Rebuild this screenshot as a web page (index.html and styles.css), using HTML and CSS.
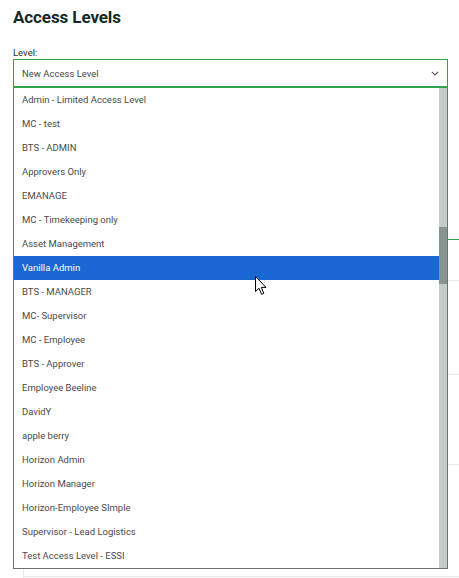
FILE: index.html
```html
<!DOCTYPE html>
<html>
<head>
<meta charset="utf-8">
<link rel="stylesheet" href="styles.css">
</head>
<body>
<div class="page">
  <h1 class="title">Access Levels</h1>
  <label class="label">Level:</label>
  <div class="select-wrap">
    <div class="select">
      <span class="select-value">New Access Level</span>
      <svg class="chevron" width="8" height="5" viewBox="0 0 8 5"><path d="M0.8 0.8 L4 4 L7.2 0.8" fill="none" stroke="#555" stroke-width="1.1"/></svg>
    </div>
    <div class="dropdown">
      <ul class="options">
        <li>Admin - Limited Access Level</li>
        <li>MC - test</li>
        <li>BTS - ADMIN</li>
        <li>Approvers Only</li>
        <li>EMANAGE</li>
        <li>MC - Timekeeping only</li>
        <li>Asset Management</li>
        <li class="active">Vanilla Admin</li>
        <li>BTS - MANAGER</li>
        <li>MC- Supervisor</li>
        <li>MC - Employee</li>
        <li>BTS - Approver</li>
        <li>Employee Beeline</li>
        <li>DavidY</li>
        <li>apple berry</li>
        <li>Horizon Admin</li>
        <li>Horizon Manager</li>
        <li>Horizon-Employee SImple</li>
        <li>Supervisor - Lead Logistics</li>
        <li>Test Access Level - ESSI</li>
      </ul>
      <div class="scrollbar"><div class="thumb"></div></div>
    </div>
    <svg class="cursor" width="13" height="20" viewBox="0 0 13 20"><path d="M0.5 0.5 L0.5 15.5 L4 12.2 L6.6 18.3 L8.8 17.3 L6.3 11.4 L11 11.4 Z" fill="#fff" stroke="#000" stroke-width="1" stroke-linejoin="miter"/></svg>
  </div>
  <div class="under">
    <div class="u-space"></div>
    <div class="u-row u-tab"></div>
    <div class="u-row u-r2"></div>
    <div class="u-row u-r3"></div>
    <div class="u-row u-r4"></div>
    <div class="u-last"></div>
    <div class="u-tail"></div>
  </div>
</div>
</body>
</html>
```
FILE: styles.css
```css
html, body {
  margin: 0;
  padding: 0;
  background: #fff;
  overflow: hidden;
}
body {
  font-family: Roboto, "Liberation Sans", sans-serif;
  width: 459px;
  height: 578px;
}
.page {
  padding: 0 0 0 13px;
}
.title {
  margin: 0;
  padding-top: 5px;
  font-size: 17px;
  font-weight: 700;
  line-height: 24px;
  color: #142a27;
  letter-spacing: -0.1px;
}
.label {
  display: block;
  margin-top: 18px;
  font-size: 9.5px;
  line-height: 12px;
  color: #1f2f2c;
}
.select-wrap {
  position: relative;
  width: 435px;
}
.select {
  box-sizing: border-box;
  height: 29px;
  border: 1px solid #2fa24c;
  border-bottom-width: 2px;
  display: flex;
  align-items: center;
  justify-content: space-between;
  padding: 0 8px 0 8px;
}
.select-value {
  font-size: 9.5px;
  color: #4a4a4a;
}
.chevron {
  display: block;
  margin-top: 1px;
}
.dropdown {
  position: absolute;
  top: 29px;
  left: 0;
  box-sizing: border-box;
  width: 435px;
  height: 481px;
  border: 1px solid #707070;
  border-top: none;
  background: #fff;
  display: flex;
  z-index: 5;
}
.options {
  list-style: none;
  margin: 0;
  padding: 0;
  flex: 1;
}
.options li {
  height: 24px;
  line-height: 24px;
  padding-left: 8px;
  font-size: 9.5px;
  color: #4a4a4a;
  white-space: nowrap;
}
.options li.active {
  background: #1967d2;
  color: #fff;
}
.scrollbar {
  width: 8px;
  background: #c4ccc8;
}
.thumb {
  margin-top: 139px;
  height: 57px;
  background: #869590;
}
.cursor {
  position: absolute;
  left: 242px;
  top: 217px;
  z-index: 6;
}
.under {
  margin-left: 10px;
}
.u-space {
  height: 151px;
}
.u-row {
  border-bottom: 1px solid #e8e8e8;
}
.u-tab {
  height: 0;
  border-bottom: 1px solid #2fa24c;
}
.u-r2 { height: 40px; }
.u-r3 { height: 93px; }
.u-r4 { height: 89px; }
.u-last {
  height: 111px;
  border-bottom: 1px solid #e8e8e8;
  border-left: 1px solid #e8e8e8;
}
.u-tail {
  height: 20px;
  border-left: 1px solid #e8e8e8;
}
```
